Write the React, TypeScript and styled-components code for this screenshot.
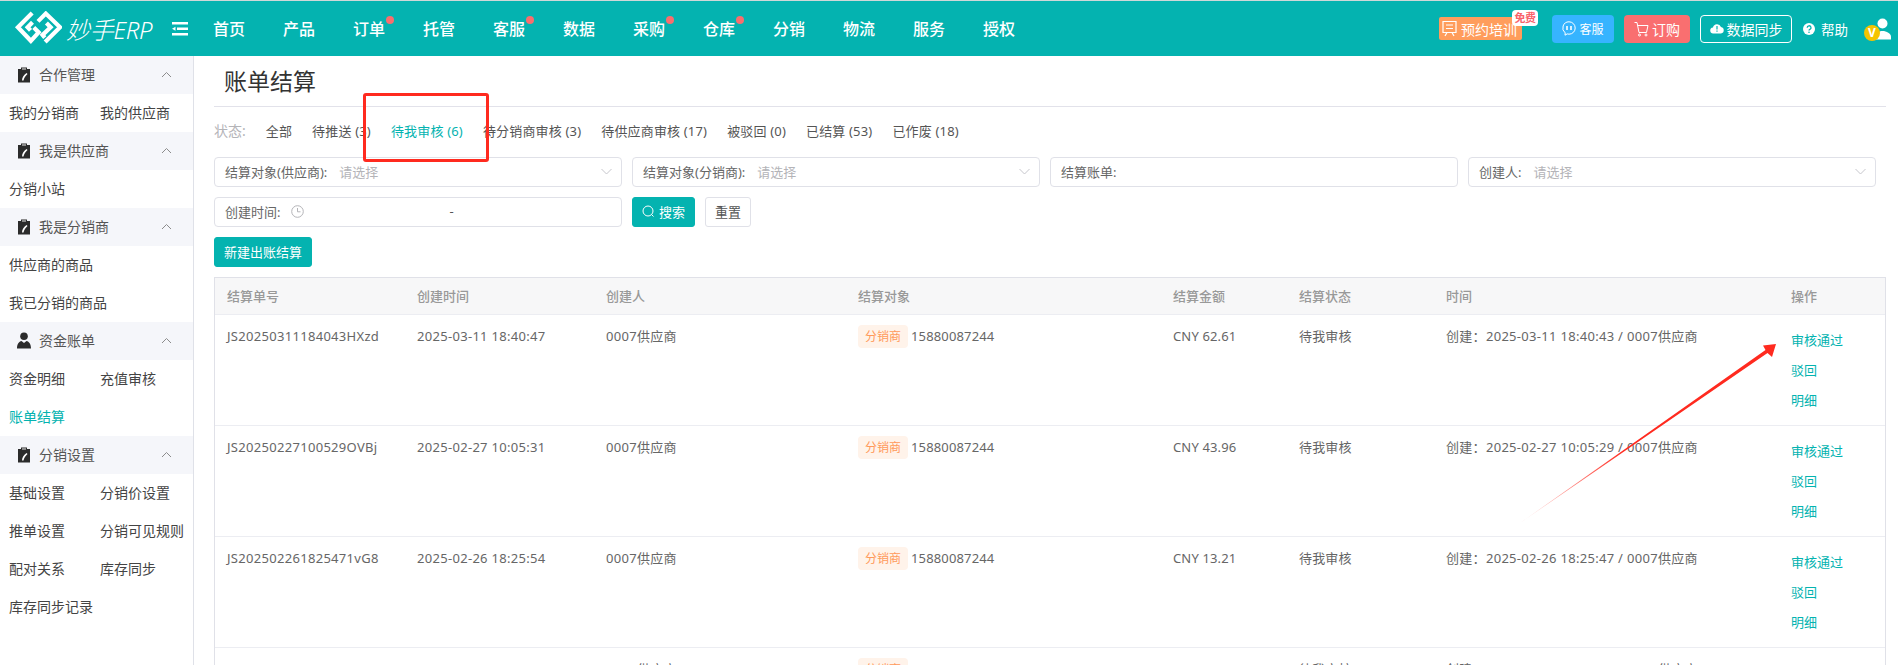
import React, { FC } from 'react';
import styled, { createGlobalStyle } from 'styled-components';

const TEAL = '#04b3b0';

const GlobalStyle = createGlobalStyle`
    html, body {
        margin: 0;
        padding: 0;
        background: #fff;
        overflow: hidden;
    }
    body {
        font-family: "Noto Sans", "Noto Sans CJK SC", sans-serif;
        font-size: 13px;
        color: #666;
    }
    * {
        box-sizing: border-box;
    }
`;

const Page = styled.div`
    position: relative;
    width: 1898px;
    height: 665px;
    overflow: hidden;
    border-top: 1px solid #cfd8d8;
`;

/* header */
const Header = styled.header`
    display: flex;
    align-items: center;
    height: 55px;
    padding-left: 14px;
    padding-right: 7px;
    background: ${TEAL};
    color: #fff;
`;

const Brand = styled.div`
    display: flex;
    align-items: center;
    width: 158px;
    gap: 4px;
`;

const BrandName = styled.span`
    font-size: 24px;
    font-style: italic;
    font-weight: 300;
    letter-spacing: -0.3px;
    white-space: nowrap;
`;

const Fold = styled.svg`
    width: 16px;
    height: 14px;
    flex: none;
`;

const Nav = styled.nav`
    display: flex;
    margin-left: 25px;
`;

const NavItem = styled.a<{ $dot?: boolean }>`
    position: relative;
    display: block;
    width: 70px;
    font-size: 16px;
    font-weight: 500;
    line-height: 24px;

    &::after {
        content: '';
        display: ${props => (props.$dot ? 'block' : 'none')};
        position: absolute;
        left: 33px;
        top: -1px;
        width: 8px;
        height: 8px;
        border-radius: 50%;
        background: #f96e6e;
    }
`;

const HeaderRight = styled.div`
    display: flex;
    align-items: center;
    margin-left: auto;
`;

const TrainButton = styled.a`
    position: relative;
    display: flex;
    align-items: center;
    gap: 4px;
    width: 83px;
    height: 23px;
    padding-left: 3px;
    margin-right: 30px;
    border-radius: 2px;
    background: #ff9d5c;
    font-size: 14px;
    white-space: nowrap;
`;

const FreeBadge = styled.span`
    position: absolute;
    left: 73px;
    top: -7px;
    width: 26px;
    height: 16px;
    border-radius: 4px;
    background: #fff;
    color: #f9626a;
    font-size: 11px;
    font-weight: 700;
    line-height: 16px;
    text-align: center;
    letter-spacing: -0.5px;
    white-space: nowrap;
`;

const HeadButton = styled.a<{ $bg?: string; $width: number; $outline?: boolean; $size?: number }>`
    display: flex;
    align-items: center;
    justify-content: center;
    width: ${props => props.$width}px;
    height: 28px;
    margin-right: 10px;
    gap: 3px;
    border-radius: 4px;
    background: ${props => props.$bg || 'transparent'};
    border: ${props => (props.$outline ? '1px solid #fff' : 'none')};
    font-size: ${props => props.$size || 14}px;
    white-space: nowrap;
`;

const Help = styled.a`
    display: flex;
    align-items: center;
    gap: 6px;
    margin-left: 1px;
    font-size: 13.5px;
    white-space: nowrap;
`;

const UserBox = styled.div`
    position: relative;
    width: 27px;
    height: 24px;
    margin-left: 16px;
`;

const UserIcon = styled.svg`
    position: absolute;
    right: 0;
    top: 1px;
    width: 16px;
    height: 22px;
`;

const VipBadge = styled.span`
    position: absolute;
    left: 0;
    bottom: 0;
    width: 16px;
    height: 16px;
    border-radius: 50%;
    background: #f5c400;
    color: #fff;
    font-size: 12px;
    font-weight: 700;
    line-height: 16px;
    text-align: center;
`;

/* layout */
const Body = styled.div`
    display: flex;
    height: 609px;
`;

const Sidebar = styled.aside`
    flex: none;
    width: 194px;
    border-right: 1px solid #dfe1e8;
`;

const GroupHead = styled.div`
    display: flex;
    align-items: center;
    height: 38px;
    padding: 0 21px 2px 17px;
    gap: 8px;
    background: #f5f6fa;
    color: #555;
    font-size: 14px;
`;

const GroupIcon = styled.svg`
    width: 14px;
    height: 17px;
    flex: none;
`;

const GroupChevron = styled.svg`
    width: 11px;
    height: 7px;
    margin-left: auto;
`;

const SideGrid = styled.div`
    display: grid;
    grid-template-columns: 91px 1fr;
    grid-auto-rows: 38px;
    align-items: center;
    padding-left: 9px;
`;

const SideLink = styled.a<{ $active?: boolean }>`
    padding-bottom: 2px;
    font-size: 14px;
    color: ${props => (props.$active ? TEAL : '#444')};
    white-space: nowrap;
`;

const Main = styled.main`
    flex: 1;
    min-width: 0;
    padding: 0 12px 0 20px;
`;

const TitleBar = styled.div`
    height: 51px;
    padding: 7px 0 0 10px;
    border-bottom: 1px solid #e2e2ea;
`;

const Title = styled.h1`
    margin: 0;
    font-size: 23px;
    line-height: 36px;
    font-weight: 400;
    color: #333;
`;

const TabBar = styled.div`
    display: flex;
    align-items: center;
    gap: 20px;
    height: 50px;
    padding-bottom: 4px;
`;

const StateLabel = styled.span`
    color: #b4b4b8;
    font-size: 14px;
`;

const Tab = styled.a<{ $active?: boolean }>`
    color: ${props => (props.$active ? TEAL : '#555')};
    font-size: 13px;
    letter-spacing: 0.17px;
    white-space: nowrap;
`;

const FilterGrid = styled.div`
    display: grid;
    grid-template-columns: repeat(4, 408px);
    grid-auto-rows: 30px;
    gap: 10px;
`;

const Field = styled.div`
    display: flex;
    align-items: center;
    height: 30px;
    padding: 0 9px 2px 10px;
    border: 1px solid #e0e1e8;
    border-radius: 4px;
    font-size: 13px;
    color: #666;
`;

const FieldLabel = styled.span`
    margin-right: 12px;
    white-space: nowrap;
`;

const Placeholder = styled.span`
    color: #b4b4b8;
`;

const FieldChevron = styled.svg`
    width: 11px;
    height: 7px;
    margin-left: auto;
`;

const ClockIcon = styled.svg`
    width: 13px;
    height: 13px;
    flex: none;
    margin-left: -1px;
`;

const DateDash = styled.span`
    margin-left: 145px;
    color: #555;
`;

const ButtonRow = styled.div`
    display: flex;
    gap: 10px;
`;

const Button = styled.button<{ $primary?: boolean; $width: number }>`
    display: flex;
    align-items: center;
    justify-content: center;
    gap: 4px;
    width: ${props => props.$width}px;
    height: 30px;
    padding: 0 0 2px;
    border: 1px solid ${props => (props.$primary ? TEAL : '#e0e1e8')};
    border-radius: 3px;
    background: ${props => (props.$primary ? TEAL : '#fff')};
    color: ${props => (props.$primary ? '#fff' : '#555')};
    font-family: inherit;
    font-size: 13px;
`;

const NewBar = styled.div`
    margin: 10px 0;
`;

/* table */
const Table = styled.div`
    border: 1px solid #e0e1e8;
    border-bottom: none;
`;

const Row = styled.div<{ $head?: boolean }>`
    display: grid;
    grid-template-columns: 190px 189px 252px 315px 126px 147px 345px 1fr;
    height: ${props => (props.$head ? '36px' : '111px')};
    padding-left: 12px;
    border-top: ${props => (props.$head ? 'none' : '1px solid #ecedf2')};
    background: ${props => (props.$head ? '#f7f7f8' : '#fff')};
`;

const HeadCell = styled.div`
    font-size: 13px;
    font-weight: 500;
    line-height: 36px;
    color: #999;
`;

const Cell = styled.div<{ $tight?: boolean }>`
    display: flex;
    align-items: flex-start;
    padding-top: 11px;
    font-size: 13px;
    line-height: 20px;
    letter-spacing: ${props => (props.$tight ? '0.15px' : '0.3px')};
    color: #666;
    white-space: nowrap;
`;

const TargetTag = styled.span`
    width: 50px;
    height: 23px;
    margin-top: -1px;
    margin-right: 3px;
    border-radius: 4px;
    background: #fff3ea;
    color: #ff9a5a;
    font-size: 12px;
    line-height: 23px;
    letter-spacing: 0;
    text-align: center;
`;

const Actions = styled.div`
    display: flex;
    flex-direction: column;
    padding-top: 10px;
`;

const ActionLink = styled.a`
    color: ${TEAL};
    font-size: 13px;
    line-height: 30px;
`;

/* markup drawn on top of the screenshot */
const RedBox = styled.div`
    position: absolute;
    left: 363px;
    top: 92px;
    width: 126px;
    height: 69px;
    border: 3px solid #ff2a1f;
    border-radius: 3px;
    pointer-events: none;
`;

const ArrowMark = styled.svg`
    position: absolute;
    left: 1510px;
    top: 334px;
    width: 275px;
    height: 195px;
    pointer-events: none;
`;

const ClipboardIcon: FC = () => (
    <GroupIcon viewBox="0 0 14 17">
        <path d="M1 3h3V1.500h6V3h3v13.500H1z" fill="#2b2b2b" />
        <path d="M5 1.500h4V4H5z" fill="#8a8a8a" />
        <path d="M5 14.500c0-3 2-6 4.500-7.500l1 1C8.500 10 7 12 6.500 14.500z" fill="#fff" />
    </GroupIcon>
);

const PersonIcon: FC = () => (
    <GroupIcon viewBox="0 0 14 17">
        <circle cx="7" cy="4.200" r="3.800" fill="#2b2b2b" />
        <path d="M0 16.500c0-4.500 2-7 4.500-7.500L7 11l2.500-2c2.500.5 4.500 3 4.500 7.500z" fill="#2b2b2b" />
    </GroupIcon>
);

const Chevron: FC = () => (
    <GroupChevron viewBox="0 0 11 7">
        <path d="M1 6l4.500-4.500L10 6" fill="none" stroke="#8c8c8c" strokeWidth="1" />
    </GroupChevron>
);

const SelectChevron: FC = () => (
    <FieldChevron viewBox="0 0 11 7">
        <path d="M.5 1l5 5 5-5" fill="none" stroke="#c6c6cc" strokeWidth="1" />
    </FieldChevron>
);

const Logo: FC = () => (
    <svg width="48" height="35" viewBox="12 10 144 108" fill="none" stroke="#fff" strokeWidth="13">
        <path d="M66 16L22 60l40 42 24-26-15-15" />
        <path d="M84 42l24-24 44 42-46 46" />
        <path d="M67 45L52 60l9 10" />
        <path d="M110 47l13 13-25 24 7 8" />
    </svg>
);

const sideGroups: { title: string; person?: boolean; links: { label: string; active?: boolean }[] }[] = [
    { title: '合作管理', links: [{ label: '我的分销商' }, { label: '我的供应商' }] },
    { title: '我是供应商', links: [{ label: '分销小站' }] },
    { title: '我是分销商', links: [{ label: '供应商的商品' }, { label: '' }, { label: '我已分销的商品' }] },
    {
        title: '资金账单',
        person: true,
        links: [{ label: '资金明细' }, { label: '充值审核' }, { label: '账单结算', active: true }],
    },
    {
        title: '分销设置',
        links: [
            { label: '基础设置' },
            { label: '分销价设置' },
            { label: '推单设置' },
            { label: '分销可见规则' },
            { label: '配对关系' },
            { label: '库存同步' },
            { label: '库存同步记录' },
        ],
    },
];

const navItems = [
    { label: '首页' },
    { label: '产品' },
    { label: '订单', dot: true },
    { label: '托管' },
    { label: '客服', dot: true },
    { label: '数据' },
    { label: '采购', dot: true },
    { label: '仓库', dot: true },
    { label: '分销' },
    { label: '物流' },
    { label: '服务' },
    { label: '授权' },
];

const tabs = [
    '全部',
    '待推送 (3)',
    '待我审核 (6)',
    '待分销商审核 (3)',
    '待供应商审核 (17)',
    '被驳回 (0)',
    '已结算 (53)',
    '已作废 (18)',
];

const columns = ['结算单号', '创建时间', '创建人', '结算对象', '结算金额', '结算状态', '时间', '操作'];

const bills = [
    { no: 'JS20250311184043HXzd', time: '2025-03-11 18:40:47', amount: 'CNY 62.61', created: '2025-03-11 18:40:43' },
    { no: 'JS20250227100529OVBj', time: '2025-02-27 10:05:31', amount: 'CNY 43.96', created: '2025-02-27 10:05:29' },
    { no: 'JS20250226182547​1vG8', time: '2025-02-26 18:25:54', amount: 'CNY 13.21', created: '2025-02-26 18:25:47' },
    { no: 'JS20250225164210KmQa', time: '2025-02-25 16:42:13', amount: 'CNY 28.40', created: '2025-02-25 16:42:10' },
];

const App: FC = () => {
    return (
        <Page>
            <GlobalStyle />
            <Header>
                <Brand>
                    <Logo />
                    <BrandName>妙手ERP</BrandName>
                </Brand>
                <Fold viewBox="0 0 16 14" fill="#fff">
                    <path d="M0 0h16v2.500H0zM5 5.500h11V8H5zM0 11h16v2.500H0zM0 6.700l3.500-2v4z" />
                </Fold>
                <Nav>
                    {navItems.map(item => (
                        <NavItem key={item.label} $dot={item.dot}>
                            {item.label}
                        </NavItem>
                    ))}
                </Nav>
                <HeaderRight>
                    <TrainButton>
                        <svg width="15" height="17" viewBox="0 0 15 17" fill="none" stroke="#fff" strokeWidth="1.200">
                            <path d="M1 1.500h13v11H1zM4 5h7M4 8.500h7M5 12.500L3 16M10 12.500l2 3.500" />
                        </svg>
                        预约培训
                        <FreeBadge>免费</FreeBadge>
                    </TrainButton>
                    <HeadButton $bg="#36b4ff" $width={62} $size={12}>
                        <svg width="14" height="15" viewBox="0 0 14 15" fill="none" stroke="#fff" strokeWidth="1">
                            <path d="M7 .8a6.200 6.200 0 1 1 0 12.400c-.6 0-1.200-.1-1.800-.3L3 14.200l.2-2.300A6.200 6.200 0 0 1 7 .8z" />
                            <path d="M5 5v4M9 5v4" strokeWidth="1.600" />
                        </svg>
                        客服
                    </HeadButton>
                    <HeadButton $bg="#f96f70" $width={66}>
                        <svg width="15" height="16" viewBox="0 0 15 16" fill="none" stroke="#fff" strokeWidth="1">
                            <path d="M.5 1.500h2.500l2 10h7.500l1.500-7H3.500" />
                            <circle cx="5.500" cy="14" r="1" />
                            <circle cx="12" cy="14" r="1" />
                        </svg>
                        订购
                    </HeadButton>
                    <HeadButton $width={92} $outline>
                        <svg width="14" height="11" viewBox="0 0 14 11">
                            <path d="M3.500 10.500a3 3 0 0 1-.5-6A4.200 4.200 0 0 1 11 4a3.300 3.300 0 0 1 0 6.500z" fill="#fff" />
                            <path d="M7 3v3.500M7 7.500v1.200" stroke={TEAL} strokeWidth="1.200" />
                        </svg>
                        数据同步
                    </HeadButton>
                    <Help>
                        <svg width="12" height="12" viewBox="0 0 12 12">
                            <circle cx="6" cy="6" r="6" fill="#fff" />
                            <path d="M4.200 4.700a1.900 1.900 0 1 1 2.700 1.700c-.6.300-.9.600-.9 1.200" fill="none" stroke={TEAL} strokeWidth="1.300" />
                            <circle cx="6" cy="9.300" r=".8" fill={TEAL} />
                        </svg>
                        帮助
                    </Help>
                    <UserBox>
                        <UserIcon viewBox="0 0 16 22" fill="#fff">
                            <circle cx="7.500" cy="5.500" r="5" />
                            <path d="M1 21.500v-3c0-3 2.500-5.500 6.500-5.500s8.500 2.500 8.500 5.500v3z" />
                        </UserIcon>
                        <VipBadge>V</VipBadge>
                    </UserBox>
                </HeaderRight>
            </Header>
            <Body>
                <Sidebar>
                    {sideGroups.map(group => (
                        <div key={group.title}>
                            <GroupHead>
                                {group.person ? <PersonIcon /> : <ClipboardIcon />}
                                {group.title}
                                <Chevron />
                            </GroupHead>
                            <SideGrid>
                                {group.links.map((link, index) => (
                                    <SideLink key={index} $active={link.active}>
                                        {link.label}
                                    </SideLink>
                                ))}
                            </SideGrid>
                        </div>
                    ))}
                </Sidebar>
                <Main>
                    <TitleBar>
                        <Title>账单结算</Title>
                    </TitleBar>
                    <TabBar>
                        <StateLabel>状态:</StateLabel>
                        {tabs.map((tab, index) => (
                            <Tab key={tab} $active={index === 2}>
                                {tab}
                            </Tab>
                        ))}
                    </TabBar>
                    <FilterGrid>
                        <Field>
                            <FieldLabel>结算对象(供应商):</FieldLabel>
                            <Placeholder>请选择</Placeholder>
                            <SelectChevron />
                        </Field>
                        <Field>
                            <FieldLabel>结算对象(分销商):</FieldLabel>
                            <Placeholder>请选择</Placeholder>
                            <SelectChevron />
                        </Field>
                        <Field>
                            <FieldLabel>结算账单:</FieldLabel>
                        </Field>
                        <Field>
                            <FieldLabel>创建人:</FieldLabel>
                            <Placeholder>请选择</Placeholder>
                            <SelectChevron />
                        </Field>
                        <Field>
                            <FieldLabel>创建时间:</FieldLabel>
                            <ClockIcon viewBox="0 0 13 13" fill="none" stroke="#b4b4b8" strokeWidth="1">
                                <circle cx="6.500" cy="6.500" r="5.800" />
                                <path d="M6.500 3v3.800h3" />
                            </ClockIcon>
                            <DateDash>-</DateDash>
                        </Field>
                        <ButtonRow>
                            <Button $primary $width={63}>
                                <svg width="13" height="13" viewBox="0 0 13 13" fill="none" stroke="#fff" strokeWidth="1">
                                    <circle cx="6" cy="6" r="5" />
                                    <path d="M9.500 9.500l2 2" />
                                </svg>
                                搜索
                            </Button>
                            <Button $width={46}>重置</Button>
                        </ButtonRow>
                    </FilterGrid>
                    <NewBar>
                        <Button $primary $width={98}>
                            新建出账结算
                        </Button>
                    </NewBar>
                    <Table>
                        <Row $head>
                            {columns.map(column => (
                                <HeadCell key={column}>{column}</HeadCell>
                            ))}
                        </Row>
                        {bills.map(bill => (
                            <Row key={bill.no}>
                                <Cell>{bill.no.replace('\u200b', '')}</Cell>
                                <Cell>{bill.time}</Cell>
                                <Cell>0007供应商</Cell>
                                <Cell $tight>
                                    <TargetTag>分销商</TargetTag>
                                    15880087244
                                </Cell>
                                <Cell $tight>{bill.amount}</Cell>
                                <Cell $tight>待我审核</Cell>
                                <Cell>创建：{bill.created} / 0007供应商</Cell>
                                <Actions>
                                    <ActionLink>审核通过</ActionLink>
                                    <ActionLink>驳回</ActionLink>
                                    <ActionLink>明细</ActionLink>
                                </Actions>
                            </Row>
                        ))}
                    </Table>
                </Main>
            </Body>
            <RedBox />
            <ArrowMark viewBox="1510 334 275 195">
                <defs>
                    <linearGradient id="arrowFade" gradientUnits="userSpaceOnUse" x1="1520" y1="522" x2="1625" y2="449">
                        <stop offset="0" stopColor="#ff2a1f" stopOpacity="0.12" />
                        <stop offset="1" stopColor="#ff2a1f" />
                    </linearGradient>
                </defs>
                <path d="M1520 522L1765.500 349 1763 344.500 1776 343 1772 356 1767.500 352z" fill="url(#arrowFade)" />
            </ArrowMark>
        </Page>
    );
};

export default App;
